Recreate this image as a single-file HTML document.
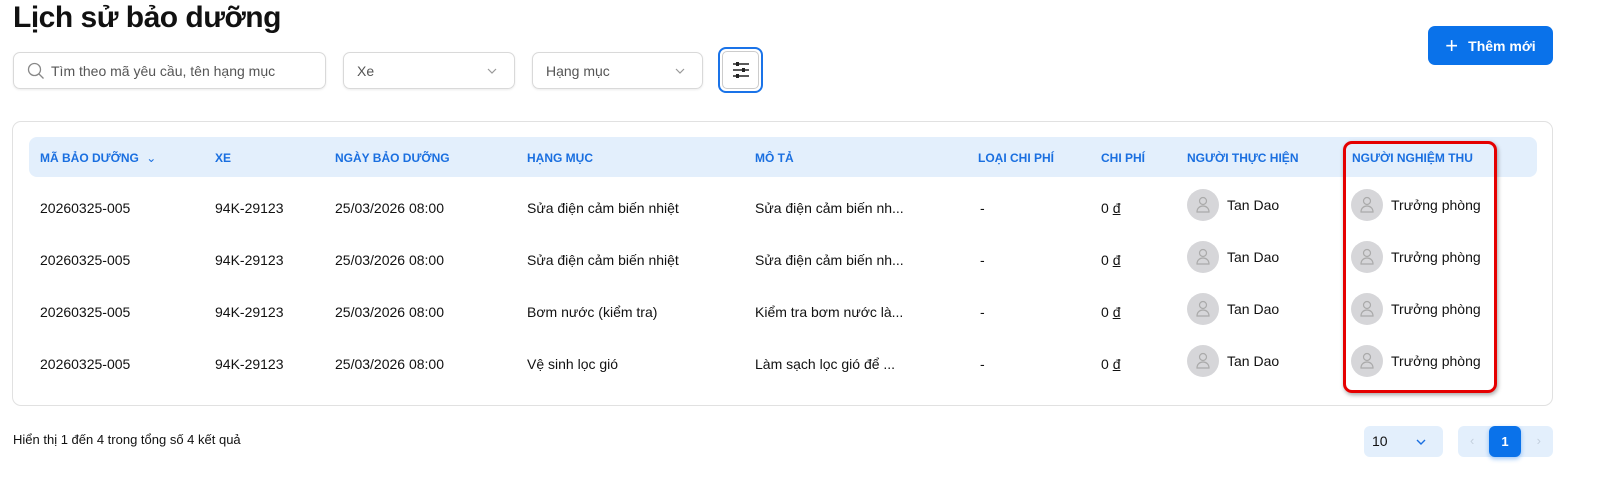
<!DOCTYPE html>
<html><head><meta charset="utf-8"><style>
*{box-sizing:border-box;margin:0;padding:0}
body{width:1597px;height:484px;background:#fff;font-family:"Liberation Sans",sans-serif;color:#111;position:relative;overflow:hidden}
.abs{position:absolute}
h1{position:absolute;left:13px;top:1px;font-size:30px;font-weight:bold;letter-spacing:-0.5px;color:#111}
.box{position:absolute;top:52px;height:37px;border:1px solid #d9d9d9;border-radius:7px;box-shadow:0 1px 2px rgba(0,0,0,.08);font-size:14px;color:#555;display:flex;align-items:center;padding-left:13px}
.chev{position:absolute;right:16px;top:12px}
.card{position:absolute;left:12px;top:121px;width:1541px;height:285px;border:1px solid #e1e1e1;border-radius:9px}
.hdr{position:absolute;left:29px;top:137px;width:1508px;height:40px;background:#e3effc;border-radius:8px}
.th{position:absolute;top:151px;font-size:12px;font-weight:bold;color:#1a6fe0;white-space:nowrap}
.td{position:absolute;font-size:14px;color:#111;white-space:nowrap}
.av{position:absolute;width:32px;height:32px;border-radius:50%;background:#d6d6d9}
</style></head><body>
<h1>Lịch sử bảo dưỡng</h1>
<div class="box" style="left:13px;width:313px"><svg width="18" height="18" viewBox="0 0 18 18" style="margin-right:6px"><circle cx="7.5" cy="7.5" r="6" fill="none" stroke="#888" stroke-width="1.3"/><path d="M12 12l4.5 4.5" stroke="#888" stroke-width="1.3"/></svg>Tìm theo mã yêu cầu, tên hạng mục</div>
<div class="box" style="left:343px;width:172px">Xe<svg class="chev" width="12" height="12" viewBox="0 0 12 12"><path d="M2 4l4 4 4-4" fill="none" stroke="#999" stroke-width="1.2"/></svg></div>
<div class="box" style="left:532px;width:171px">Hạng mục<svg class="chev" width="12" height="12" viewBox="0 0 12 12"><path d="M2 4l4 4 4-4" fill="none" stroke="#999" stroke-width="1.2"/></svg></div>
<div class="abs" style="left:718px;top:47px;width:45px;height:46px;border:2px solid #1a73e8;border-radius:8px;padding:2px"><div style="width:100%;height:100%;border:1px solid #ccc;border-radius:5px;display:flex;align-items:center;justify-content:center">
<svg width="18" height="18" viewBox="0 0 18 18" stroke="#222" stroke-width="1.5" fill="#222"><path d="M1 3h16M1 9h16M1 15h16"/><rect x="4" y="1" width="3" height="4" stroke="none"/><rect x="10" y="7" width="3" height="4" stroke="none"/><rect x="4" y="13" width="3" height="4" stroke="none"/></svg></div></div>
<div class="abs" style="left:1428px;top:26px;width:125px;height:39px;background:#0a72ea;border-radius:7px;color:#fff;font-size:14px;font-weight:bold;display:flex;align-items:center;justify-content:center"><span style="font-size:22px;font-weight:normal;margin-right:10px;line-height:1">+</span>Thêm mới</div>
<div class="card"></div>
<div class="hdr"></div>
<div class="th" style="left:40px">MÃ BẢO DƯỠNG <span style="font-weight:normal;margin-left:4px">⌄</span></div>
<div class="th" style="left:215px">XE</div>
<div class="th" style="left:335px">NGÀY BẢO DƯỠNG</div>
<div class="th" style="left:527px">HẠNG MỤC</div>
<div class="th" style="left:755px">MÔ TẢ</div>
<div class="th" style="left:978px">LOẠI CHI PHÍ</div>
<div class="th" style="left:1101px">CHI PHÍ</div>
<div class="th" style="left:1187px">NGƯỜI THỰC HIỆN</div>
<div class="th" style="left:1352px">NGƯỜI NGHIỆM THU</div>

<!-- rows -->
<div id="rows"></div>
<div class="td" style="left:40px;top:200px">20260325-005</div><div class="td" style="left:215px;top:200px">94K-29123</div><div class="td" style="left:335px;top:200px">25/03/2026 08:00</div><div class="td" style="left:527px;top:200px">Sửa điện cảm biến nhiệt</div><div class="td" style="left:755px;top:200px">Sửa điện cảm biến nh...</div><div class="td" style="left:980px;top:200px">-</div><div class="td" style="left:1101px;top:200px">0 <u>đ</u></div>
<div class="td" style="left:40px;top:252px">20260325-005</div><div class="td" style="left:215px;top:252px">94K-29123</div><div class="td" style="left:335px;top:252px">25/03/2026 08:00</div><div class="td" style="left:527px;top:252px">Sửa điện cảm biến nhiệt</div><div class="td" style="left:755px;top:252px">Sửa điện cảm biến nh...</div><div class="td" style="left:980px;top:252px">-</div><div class="td" style="left:1101px;top:252px">0 <u>đ</u></div>
<div class="td" style="left:40px;top:304px">20260325-005</div><div class="td" style="left:215px;top:304px">94K-29123</div><div class="td" style="left:335px;top:304px">25/03/2026 08:00</div><div class="td" style="left:527px;top:304px">Bơm nước (kiểm tra)</div><div class="td" style="left:755px;top:304px">Kiểm tra bơm nước là...</div><div class="td" style="left:980px;top:304px">-</div><div class="td" style="left:1101px;top:304px">0 <u>đ</u></div>
<div class="td" style="left:40px;top:356px">20260325-005</div><div class="td" style="left:215px;top:356px">94K-29123</div><div class="td" style="left:335px;top:356px">25/03/2026 08:00</div><div class="td" style="left:527px;top:356px">Vệ sinh lọc gió</div><div class="td" style="left:755px;top:356px">Làm sạch lọc gió để ...</div><div class="td" style="left:980px;top:356px">-</div><div class="td" style="left:1101px;top:356px">0 <u>đ</u></div>

<svg width="0" height="0" style="position:absolute"><defs><g id="u" fill="none" stroke="#aaa" stroke-width="1.2"><circle cx="16" cy="12" r="3.5"/><path d="M10 23c0-4 3-6 6-6s6 2 6 6z"/></g></defs></svg>
<div class="av" style="left:1187px;top:189px"><svg width="32" height="32"><use href="#u"/></svg></div><div class="td" style="left:1227px;top:197px">Tan Dao</div>
<div class="av" style="left:1187px;top:241px"><svg width="32" height="32"><use href="#u"/></svg></div><div class="td" style="left:1227px;top:249px">Tan Dao</div>
<div class="av" style="left:1187px;top:293px"><svg width="32" height="32"><use href="#u"/></svg></div><div class="td" style="left:1227px;top:301px">Tan Dao</div>
<div class="av" style="left:1187px;top:345px"><svg width="32" height="32"><use href="#u"/></svg></div><div class="td" style="left:1227px;top:353px">Tan Dao</div>
<div class="av" style="left:1351px;top:189px"><svg width="32" height="32"><use href="#u"/></svg></div><div class="td" style="left:1391px;top:197px">Trưởng phòng</div>
<div class="av" style="left:1351px;top:241px"><svg width="32" height="32"><use href="#u"/></svg></div><div class="td" style="left:1391px;top:249px">Trưởng phòng</div>
<div class="av" style="left:1351px;top:293px"><svg width="32" height="32"><use href="#u"/></svg></div><div class="td" style="left:1391px;top:301px">Trưởng phòng</div>
<div class="av" style="left:1351px;top:345px"><svg width="32" height="32"><use href="#u"/></svg></div><div class="td" style="left:1391px;top:353px">Trưởng phòng</div>

<div class="abs" style="left:1343px;top:141px;width:154px;height:252px;border:3px solid #e50000;border-radius:9px;box-shadow:1px 2px 4px rgba(0,0,0,.35)"></div>

<div class="td" style="left:13px;top:432px;font-size:13px">Hiển thị 1 đến 4 trong tổng số 4 kết quả</div>
<div class="abs" style="left:1364px;top:426px;width:79px;height:31px;background:#e3effc;border-radius:6px;font-size:14px;padding:7px 8px">10<svg style="position:absolute;right:16px;top:11px" width="12" height="10" viewBox="0 0 12 10"><path d="M2 3l4 4 4-4" fill="none" stroke="#1a6fe0" stroke-width="1.4"/></svg></div>
<div class="abs" style="left:1458px;top:426px;width:95px;height:31px;background:#e3effc;border-radius:6px;color:#c3cfdd;font-size:13px"><span style="position:absolute;left:12px;top:7px">‹</span><span style="position:absolute;right:12px;top:7px">›</span></div>
<div class="abs" style="left:1489px;top:426px;width:32px;height:31px;background:#0a72ea;border-radius:6px;color:#fff;font-size:13px;font-weight:bold;text-align:center;line-height:31px;box-shadow:0 2px 5px rgba(10,114,234,.4)">1</div>
</body></html>
